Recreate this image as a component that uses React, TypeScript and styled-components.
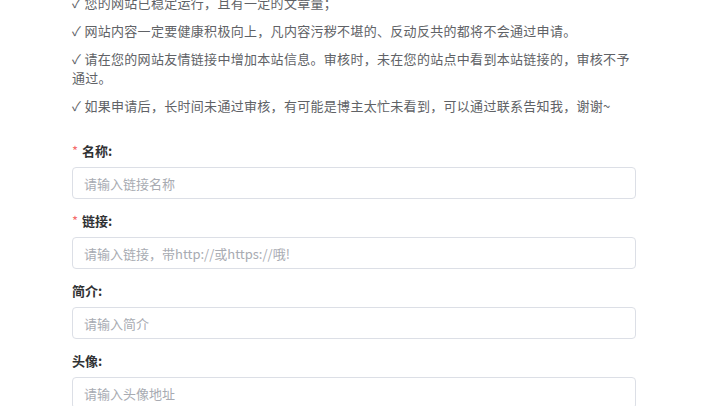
import React from "react";
import styled, { createGlobalStyle } from "styled-components";

const Global = createGlobalStyle`
  html, body { margin: 0; padding: 0; background: #ffffff; }
  body { font-family: "Noto Sans CJK SC", "Noto Sans", sans-serif; }
  * { box-sizing: border-box; }
`;

const Page = styled.div`
  width: 720px;
  height: 406px;
  overflow: hidden;
  padding: 0 84px 0 72px;
`;

const Notes = styled.div`
  margin-top: -7px;
  max-width: 560px;
  display: flex;
  flex-direction: column;
  gap: 9px;
`;

const Note = styled.p`
  margin: 0;
  font-size: 13px;
  line-height: 19px;
  letter-spacing: 0.3px;
  color: #606266;
`;

const Form = styled.form`
  margin-top: 26px;
  display: flex;
  flex-direction: column;
  gap: 12px;
`;

const Field = styled.div`
  display: flex;
  flex-direction: column;
  gap: 6px;
`;

const Label = styled.label`
  font-size: 13px;
  line-height: 20px;
  font-weight: 700;
  color: #303133;
  display: flex;
  align-items: center;
`;

const Star = styled.span`
  color: #f56c6c;
  margin-right: 4px;
  font-weight: 400;
`;

const Input = styled.input`
  width: 100%;
  height: 32px;
  border: 1px solid #dcdfe6;
  border-radius: 4px;
  padding: 0 11px;
  font-size: 13px;
  font-family: "Noto Sans CJK SC", "Noto Sans", sans-serif;
  color: #606266;
  background: #fff;
  outline: none;
  &::placeholder { color: #a8abb2; }
`;

const notes = [
  "✓ 您的网站已稳定运行，且有一定的文章量；",
  "✓ 网站内容一定要健康积极向上，凡内容污秽不堪的、反动反共的都将不会通过申请。",
  "✓ 请在您的网站友情链接中增加本站信息。审核时，未在您的站点中看到本站链接的，审核不予通过。",
  "✓ 如果申请后，长时间未通过审核，有可能是博主太忙未看到，可以通过联系告知我，谢谢~",
];

const fields = [
  { label: "名称:", required: true, placeholder: "请输入链接名称" },
  { label: "链接:", required: true, placeholder: "请输入链接，带http://或https://哦!" },
  { label: "简介:", required: false, placeholder: "请输入简介" },
  { label: "头像:", required: false, placeholder: "请输入头像地址" },
];

export default function App() {
  return (
    <Page>
      <Global />
      <Notes>
        {notes.map((n) => (
          <Note key={n}>{n}</Note>
        ))}
      </Notes>
      <Form onSubmit={(e) => e.preventDefault()}>
        {fields.map((f) => (
          <Field key={f.label}>
            <Label>
              {f.required && <Star>*</Star>}
              {f.label}
            </Label>
            <Input placeholder={f.placeholder} />
          </Field>
        ))}
      </Form>
    </Page>
  );
}
